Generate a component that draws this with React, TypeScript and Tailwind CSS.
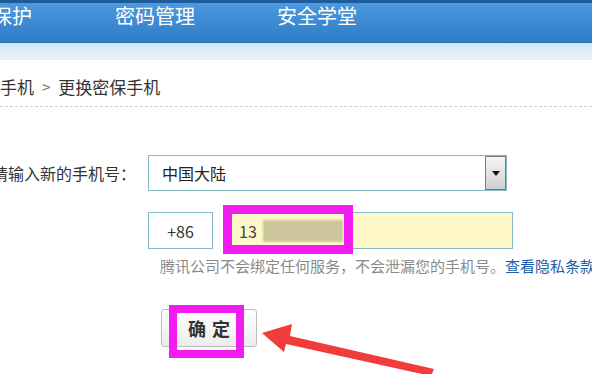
const cjk = 'font-["Noto_Sans_CJK_SC","Noto_Sans",sans-serif]';

function NavBar() {
  return (
    <div className="h-[43px] border-t-[3px] border-b border-t-[#1d5c9a] border-b-[#2a6db0] bg-gradient-to-b from-[#4c99de] to-[#2f7cc8] text-white text-[20px] leading-[24px]">
      <div className="flex pt-[1px]">
        <span className="ml-[-8px] whitespace-nowrap">保护</span>
        <span className="ml-[83px] whitespace-nowrap">密码管理</span>
        <span className="ml-[82px] whitespace-nowrap">安全学堂</span>
      </div>
    </div>
  );
}

function Breadcrumb() {
  return (
    <div className="h-[47px] border-b border-dashed border-[#cfcfcf] flex items-center pt-[8px] text-[17px] leading-[22px] text-[#333]">
      <span className="whitespace-nowrap">手机</span>
      <span className="ml-[8px] mr-[8px] text-[#777] text-[15px]">&gt;</span>
      <span className="whitespace-nowrap">更换密保手机</span>
    </div>
  );
}

function SelectBox() {
  return (
    <div className="w-[359px] h-[36px] border border-[#86bac6] bg-white flex items-center">
      <span className="pl-[13px] flex-1 text-[16px] leading-[20px] text-[#222]">中国大陆</span>
      <div className="w-[21px] h-full border border-[#7a7a7a] bg-gradient-to-b from-[#f6f6f6] to-[#cfcfcf] flex items-center justify-center">
        <div className="w-0 h-0 border-l-[4px] border-r-[4px] border-t-[5px] border-l-transparent border-r-transparent border-t-[#111]" />
      </div>
    </div>
  );
}

function PhoneRow() {
  return (
    <div className="flex gap-[10px]">
      <div className="w-[65px] h-[37px] border border-[#86bac6] bg-white flex items-center justify-center text-[16px] text-[#333]">
        +86
      </div>
      <div className="w-[290px] h-[37px] border border-[#86bac6] bg-[#fff8c9] flex items-center">
        <span className="pl-[15px] text-[16px] leading-[20px] text-[#444]">13</span>
        <div className="ml-[6px] w-[80px] h-[22px] bg-[#cdc59d] blur-[1px]" />
      </div>
    </div>
  );
}

function Arrow() {
  return (
    <svg className="absolute left-0 top-0 pointer-events-none" width="592" height="374" viewBox="0 0 592 374">
      <polygon
        points="262,333 292,324 290,336 434,369 431,376 286,344 284,352"
        fill="#f23b3b"
      />
    </svg>
  );
}

export default function App() {
  return (
    <div className={`relative w-[592px] h-[374px] overflow-hidden bg-white ${cjk}`}>
      <NavBar />
      <div className="h-[17px] bg-gradient-to-b from-[#d3e6f8] to-[#e9f2fb] border-b border-[#eceff2]" />
      <Breadcrumb />

      {/* Form */}
      <div className="pt-[48px]">
        <div className="flex items-center">
          <div className="w-[148px] flex justify-end pr-[12px]">
            <span className="whitespace-nowrap text-[16px] leading-[20px] text-[#333]">请输入新的手机号：</span>
          </div>
          <SelectBox />
        </div>

        <div className="ml-[148px] mt-[21px]">
          <PhoneRow />
          <div className="mt-[7px] ml-[12px] whitespace-nowrap text-[15px] leading-[20px] text-[#8a8a8a]">
            腾讯公司不会绑定任何服务，不会泄漏您的手机号。
            <span className="text-[#1d5ea6]">查看隐私条款</span>
          </div>
        </div>

        <div className="ml-[161px] mt-[33px]">
          <button className="w-[96px] h-[38px] rounded-[3px] border border-[#bdbdbd] bg-gradient-to-b from-[#ffffff] to-[#ececec] text-[18px] font-bold text-[#333] tracking-[6px] pl-[6px]">
            确定
          </button>
        </div>
      </div>

      {/* Annotation overlays */}
      <div className="absolute left-[223px] top-[205px] w-[130px] h-[49px] border-[9px] border-[#f01cf0]" />
      <div className="absolute left-[169px] top-[305px] w-[75px] h-[53px] border-[8px] border-[#f01cf0]" />
      <Arrow />
    </div>
  );
}
